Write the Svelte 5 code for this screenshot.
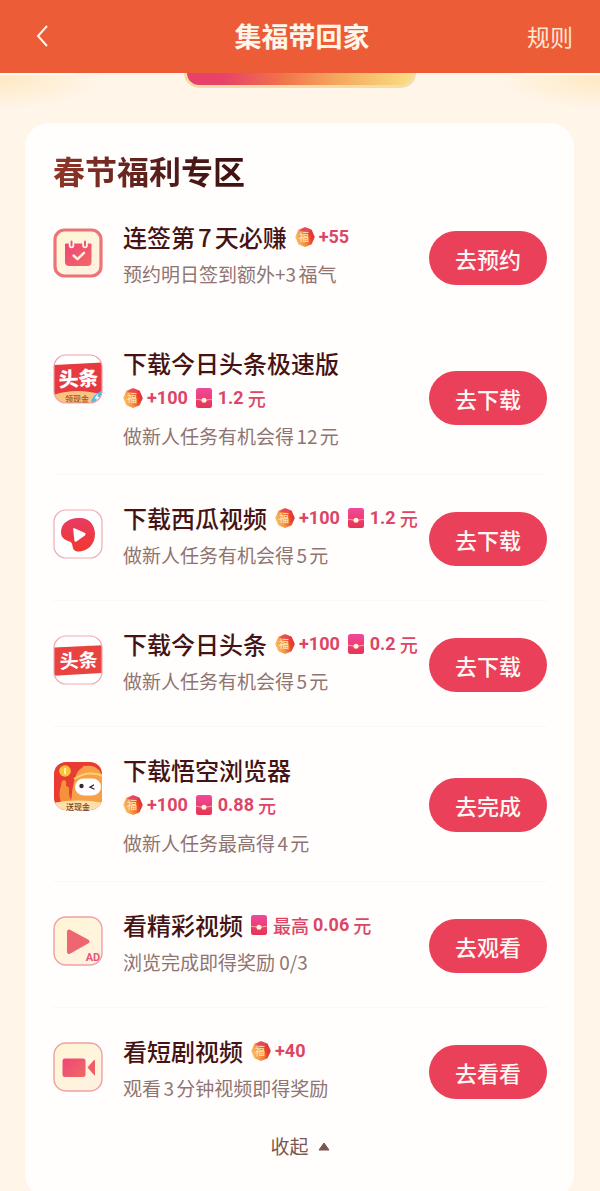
<script>
  let expanded = $state(true);

  const tasks = [
    { icon: 'calendar', title: '连签第7天必赚', luck: '+55', desc: '预约明日签到额外+3福气', action: '去预约' },
    { icon: 'lite', title: '下载今日头条极速版', luck: '+100', cash: '1.2', desc: '做新人任务有机会得12元', action: '去下载', tall: true },
    { icon: 'melon', title: '下载西瓜视频', luck: '+100', cash: '1.2', desc: '做新人任务有机会得5元', action: '去下载' },
    { icon: 'news', title: '下载今日头条', luck: '+100', cash: '0.2', desc: '做新人任务有机会得5元', action: '去下载' },
    { icon: 'monkey', title: '下载悟空浏览器', luck: '+100', cash: '0.88', desc: '做新人任务最高得4元', action: '去完成', tall: true },
    { icon: 'play', title: '看精彩视频', cash: '0.06', prefix: '最高', desc: '浏览完成即得奖励 0/3', action: '去观看' },
    { icon: 'camera', title: '看短剧视频', luck: '+40', desc: '观看3分钟视频即得奖励', action: '去看看' }
  ];
</script>

<svg class="defs" aria-hidden="true">
  <defs>
    <linearGradient id="pink" x1="0" y1="0" x2="1" y2="1">
      <stop offset="0" stop-color="#f0457a" /><stop offset="1" stop-color="#ef6a64" />
    </linearGradient>
    <linearGradient id="cream" x1="0" y1="0" x2="1" y2="1">
      <stop offset="0" stop-color="#fff6d2" /><stop offset="0.5" stop-color="#fff4dc" /><stop offset="1" stop-color="#fff0e2" />
    </linearGradient>
    <linearGradient id="melonFill" x1="0" y1="0" x2="0" y2="1">
      <stop offset="0" stop-color="#e93a63" /><stop offset="1" stop-color="#f0392f" />
    </linearGradient>
    <linearGradient id="packetFill" x1="0" y1="0" x2="0" y2="1">
      <stop offset="0" stop-color="#f04a9c" /><stop offset="1" stop-color="#e63452" />
    </linearGradient>
    <linearGradient id="luckFill" x1="0" y1="0.7" x2="1" y2="0.4">
      <stop offset="0" stop-color="#f8bd62" /><stop offset="0.45" stop-color="#f3893f" /><stop offset="0.8" stop-color="#e8452f" /><stop offset="1" stop-color="#e5303c" />
    </linearGradient>
    <clipPath id="tile"><rect x="1" y="1" width="48" height="48" rx="12" /></clipPath>
  </defs>
</svg>

{#snippet luckIcon()}
  <svg class="luck" viewBox="0 0 20 20" aria-hidden="true">
    <path d="M10 1.6 L15.6 4 18.2 10 15.6 16 10 18.4 4.400 16 1.800 10 4.400 4Z" fill="url(#luckFill)" stroke="url(#luckFill)" stroke-width="3" stroke-linejoin="round" />
    <path d="M4.500 3.400 Q10 -1.500 15.500 3.200 Q11 5.200 4.500 3.400Z" fill="#e5476c" />
    <text x="9" y="14" text-anchor="middle" font-size="10" font-weight="700" fill="#ffe9b5" fill-opacity="0.850">福</text>
  </svg>
{/snippet}

{#snippet packetIcon()}
  <svg class="packet" viewBox="0 0 16 20" aria-hidden="true">
    <rect width="16" height="20" rx="2.5" fill="url(#packetFill)" />
    <path d="M0 11.2 Q8 13.6 16 11.2" fill="none" stroke="#f9a6a8" stroke-width="1" />
    <circle cx="8" cy="12.3" r="2.5" fill="#fff2d5" />
  </svg>
{/snippet}

{#snippet rewards(task)}
  {#if task.luck}
    <span class="reward">{@render luckIcon()}<b>{task.luck}</b></span>
  {/if}
  {#if task.cash}
    <span class="reward">{@render packetIcon()}{#if task.prefix}<span class="word">{task.prefix}</span>{/if}<b>{task.cash}</b><span class="word">元</span></span>
  {/if}
{/snippet}

{#snippet tileIcon(name)}
  <svg class="tile" viewBox="0 0 50 50" aria-hidden="true">
    {#if name === 'calendar'}
      <rect x="2" y="2" width="46" height="46" rx="9.5" fill="url(#cream)" stroke="#ec7377" stroke-width="3.2" />
      <path d="M12.500 16 H38 V34.500 Q38 37.500 35 37.500 H15.500 Q12.500 37.500 12.500 34.500Z" fill="url(#pink)" stroke="url(#pink)" stroke-linejoin="round" />
      <path d="M18.500 13.500 V17.500 M32 13.500 V17.500" stroke="#fff6df" stroke-width="5.5" stroke-linecap="round" />
      <path d="M18.500 13.500 V17.500 M32 13.500 V17.500" stroke="#ee5777" stroke-width="2" stroke-linecap="round" />
      <path d="M20.500 27.500 L24.500 31.200 31 24.800" fill="none" stroke="#fff4dd" stroke-width="2.5" stroke-linecap="round" stroke-linejoin="round" />
    {:else if name === 'lite'}
      <rect x="1" y="1" width="48" height="48" rx="12" fill="#fff" />
      <g clip-path="url(#tile)">
        <path d="M0 11 L50 8.500 V43 H0Z" fill="#e63940" />
        <path d="M0 41 Q24 33 50 41 V50 H0Z" fill="#fbc580" />
        <path d="M38 50 Q37 42 50 36 V50Z" fill="#50bde8" />
        <path d="M45 39.500 L41.500 44.500 H44 L42.500 48 47 43 H44.500Z" fill="#fff" />
      </g>
      <text class="tilt" x="25.5" y="32" text-anchor="middle" font-size="20" font-weight="900" fill="#fff">头条</text>
      <text x="24" y="47.500" text-anchor="middle" font-size="8" font-weight="500" fill="#9b5227">领现金</text>
      <rect x="1" y="1" width="48" height="48" rx="12" fill="none" stroke="#f0a1a6" stroke-width="1.2" />
    {:else if name === 'melon'}
      <rect x="1" y="1" width="48" height="48" rx="12" fill="#fff" stroke="#efabb1" stroke-width="1.2" />
      <path d="M25 9 C36 8 42 16 42 25 C42 36 34 42.500 25.500 42.500 C21 42.500 20 40 19.500 37 C19 32.500 17 33 13 31 C9 29 7.500 26 8.200 21 C9.500 13.500 16 9.500 25 9Z" fill="url(#melonFill)" />
      <path d="M20.200 20.500 Q20 18.500 22 19.400 L31.500 23.800 Q33.500 25 31.800 26.500 L23.500 32.500 Q21.700 33.500 21.400 31.300Z" fill="#fff" />
    {:else if name === 'news'}
      <rect x="1" y="1" width="48" height="48" rx="12" fill="#fff" />
      <path d="M1 12.500 L49 10.300 V38 L1 40.800Z" fill="#e9433f" />
      <text class="tilt" x="25.5" y="32.500" text-anchor="middle" font-size="19" font-weight="700" fill="#fff">头条</text>
      <rect x="1" y="1" width="48" height="48" rx="12" fill="none" stroke="#efabb1" stroke-width="1.200" />
    {:else if name === 'monkey'}
      <g clip-path="url(#tile)">
        <rect width="50" height="50" fill="#e83b32" />
        <path d="M18 44 C19 30 21 10 29 7 Q30 4 33 5 C42 3 49 10 50 18 V44Z" fill="#f7a04a" />
        <path d="M8 42 Q5 32 8 25 Q8 19 11 19 Q14 19 13 25 Q17 25 16 31 Q16 38 21 42Z" fill="#f5913a" />
        <path d="M21 18 Q35 9 50 15" fill="none" stroke="#ffd072" stroke-width="2" />
        <rect x="22" y="17.500" width="26" height="17" rx="8.500" fill="#fff" />
        <path d="M25 35 H45 V42 H25Z" fill="#f9a04a" />
        <circle cx="28.500" cy="25" r="2.200" fill="#372538" />
        <path d="M40.500 24 L37 26.200 41 28" fill="none" stroke="#372538" stroke-width="1.300" stroke-linecap="round" />
        <circle cx="12" cy="10" r="5.800" fill="#fac23d" /><path d="M12 7 V13" stroke="#fff0a2" stroke-width="2" />
        <path d="M0 42 Q25 37 50 42 V50 H0Z" fill="#fde0a9" />
      </g>
      <text x="25" y="48.500" text-anchor="middle" font-size="8" font-weight="500" fill="#814020">送现金</text>
    {:else if name === 'play'}
      <rect x="1" y="1" width="48" height="48" rx="12" fill="url(#cream)" stroke="#efa0a5" stroke-width="1.400" />
      <path d="M16 15.500 L34.500 25.500 16 36Z" fill="#ee6670" stroke="#ee6670" stroke-width="4" stroke-linejoin="round" />
      <text class="ad" x="40" y="45" text-anchor="middle" font-size="11" font-weight="700" fill="#e75878">AD</text>
    {:else}
      <rect x="1" y="1" width="48" height="48" rx="12" fill="url(#cream)" stroke="#efa0a5" stroke-width="1.400" />
      <rect x="9.500" y="16.500" width="23" height="18.500" rx="2.500" fill="url(#pink)" />
      <path d="M34.500 25.500 L41 18 Q42 17.500 42 19 V32.500 Q42 34 41 33Z" fill="#ee6065" />
    {/if}
  </svg>
{/snippet}

<div class="page">
  <header>
    <button class="back" aria-label="返回">
      <svg viewBox="0 0 14 24" aria-hidden="true"><path d="M12 2 L3 12 L12 22" fill="none" stroke="currentColor" stroke-width="2" /></svg>
    </button>
    <h1>集福带回家</h1>
    <a href="#rules">规则</a>
  </header>

  <main>
    <div class="hero"><div class="pill"></div></div>
    <section>
      <h2><span>春节福利专区</span></h2>
      <ul>
        {#each expanded ? tasks : tasks.slice(0, 3) as task}
          <li>
            {@render tileIcon(task.icon)}
            <div class="info">
              <div class="line">
                <h3>{task.title}</h3>
                {#if !task.tall}{@render rewards(task)}{/if}
              </div>
              {#if task.tall}
                <div class="line extra">{@render rewards(task)}</div>
              {/if}
              <p>{task.desc}</p>
            </div>
            <button class="action">{task.action}</button>
          </li>
        {/each}
      </ul>
      <button class="toggle" aria-expanded={expanded} onclick={() => (expanded = !expanded)}>
        {expanded ? '收起' : '展开'}
        <svg class:down={!expanded} viewBox="0 0 12 9" aria-hidden="true"><path d="M6 1 L11 8 H1Z" fill="currentColor" stroke="currentColor" stroke-linejoin="round" /></svg>
      </button>
    </section>
  </main>
</div>

<style>
  :global(body) {
    margin: 0;
    background: #fff5e9;
  }
  .page {
    height: 100vh;
    display: flex;
    flex-direction: column;
    font-family: 'Noto Sans CJK SC', sans-serif;
    text-autospace: normal;
    color: #451313;
  }
  .defs {
    position: absolute;
    width: 0;
    height: 0;
  }
  button {
    font: inherit;
    border: 0;
    padding: 0;
    background: none;
    cursor: pointer;
  }
  h1, h2, h3, p, ul {
    margin: 0;
    padding: 0;
  }
  header {
    flex: none;
    display: grid;
    grid-template-columns: 1fr auto 1fr;
    align-items: center;
    padding: 18px 27px 19px 31px;
    background: #ec5c36;
    color: #fff5e8;
  }
  .back {
    justify-self: start;
    display: flex;
    margin-left: 4px;
    color: inherit;
  }
  .back svg {
    width: 14px;
    height: 24px;
  }
  h1 {
    font-size: 27px;
    line-height: 36px;
    font-weight: 700;
  }
  header a {
    justify-self: end;
    font-size: 23px;
    line-height: 36px;
    color: #ffe5d5;
    text-decoration: none;
  }
  main {
    flex: 1;
    min-height: 0;
    overflow-y: auto;
    scrollbar-width: none;
    background: #fff5e9;
  }
  .hero {
    height: 50px;
    display: flex;
    justify-content: center;
    background:
      linear-gradient(90deg, #fffcf0 70px, transparent 90px, transparent calc(100% - 90px), #fffcf0 calc(100% - 70px)) 0 0 / 100% 2px no-repeat,
      radial-gradient(ellipse 100px 30px at 0 6px, #fee9c3, transparent),
      radial-gradient(ellipse 100px 30px at 100% 6px, #fee9c3, transparent);
  }
  .pill {
    box-sizing: border-box;
    width: 232px;
    height: 15px;
    border: solid #f6dca6;
    border-width: 0 3px 3px;
    border-radius: 0 0 32px 32px;
    background: linear-gradient(90deg, #e8416a 15%, #ef6f4c 40%, #f5a55b 65%, #fadf85);
  }
  section {
    margin: 0 26px 0 25px;
    padding: 24px 27px 40px 28px;
    border-radius: 24px;
    background: #fffefc;
  }
  h2 {
    font-size: 32px;
    line-height: 47px;
    font-weight: 700;
  }
  h2 span {
    background: linear-gradient(90deg, #913629, #4d1a18 65%, #3f1010);
    background-clip: text;
    color: transparent;
  }
  ul {
    list-style: none;
  }
  li {
    box-sizing: border-box;
    min-height: 126px;
    padding: 26px 0 24px;
    display: flex;
    gap: 20px;
    align-items: flex-start;
    border-bottom: 1px solid #fbf7f6;
  }
  li:first-child,
  li:last-child {
    border-color: transparent;
  }
  .tile {
    flex: none;
    width: 50px;
    height: 50px;
    margin-top: 8px;
  }
  .tile text,
  .luck text {
    font-family: 'Noto Sans CJK SC', sans-serif;
  }
  .tile .ad {
    font-family: Roboto, sans-serif;
  }
  .tilt {
    transform: rotate(-3deg);
    transform-origin: center;
  }
  .info {
    flex: 1;
    min-width: 0;
    white-space: nowrap;
  }
  .line {
    display: flex;
    align-items: center;
    gap: 8px;
    height: 34px;
  }
  .extra {
    height: 36px;
  }
  h3 {
    font-size: 24px;
    line-height: 34px;
    font-weight: 500;
  }
  .reward {
    display: flex;
    align-items: center;
    gap: 4px;
    color: #dd4566;
    font-size: 18px;
    line-height: 28px;
  }
  .reward b {
    font-family: Roboto, sans-serif;
    font-weight: 700;
  }
  .luck {
    width: 20px;
    height: 20px;
  }
  .packet {
    width: 16px;
    height: 20px;
    margin-right: 2px;
  }
  .word {
    font-weight: 500;
  }
  p {
    margin-top: 6px;
    font-size: 19px;
    line-height: 28px;
    color: #8f7472;
  }
  .action {
    flex: none;
    align-self: center;
    width: 118px;
    height: 54px;
    margin-left: -20px;
    border-radius: 27px;
    background: #eb4059;
    color: #fff7f3;
    font-size: 22px;
    line-height: 52px;
    font-weight: 500;
  }
  .toggle {
    display: flex;
    align-items: center;
    gap: 9px;
    margin: 0 auto;
    font-size: 19px;
    line-height: 24px;
    color: #7b5552;
  }
  .toggle svg {
    width: 12px;
    height: 9px;
  }
  .down {
    transform: rotate(180deg);
  }
</style>
